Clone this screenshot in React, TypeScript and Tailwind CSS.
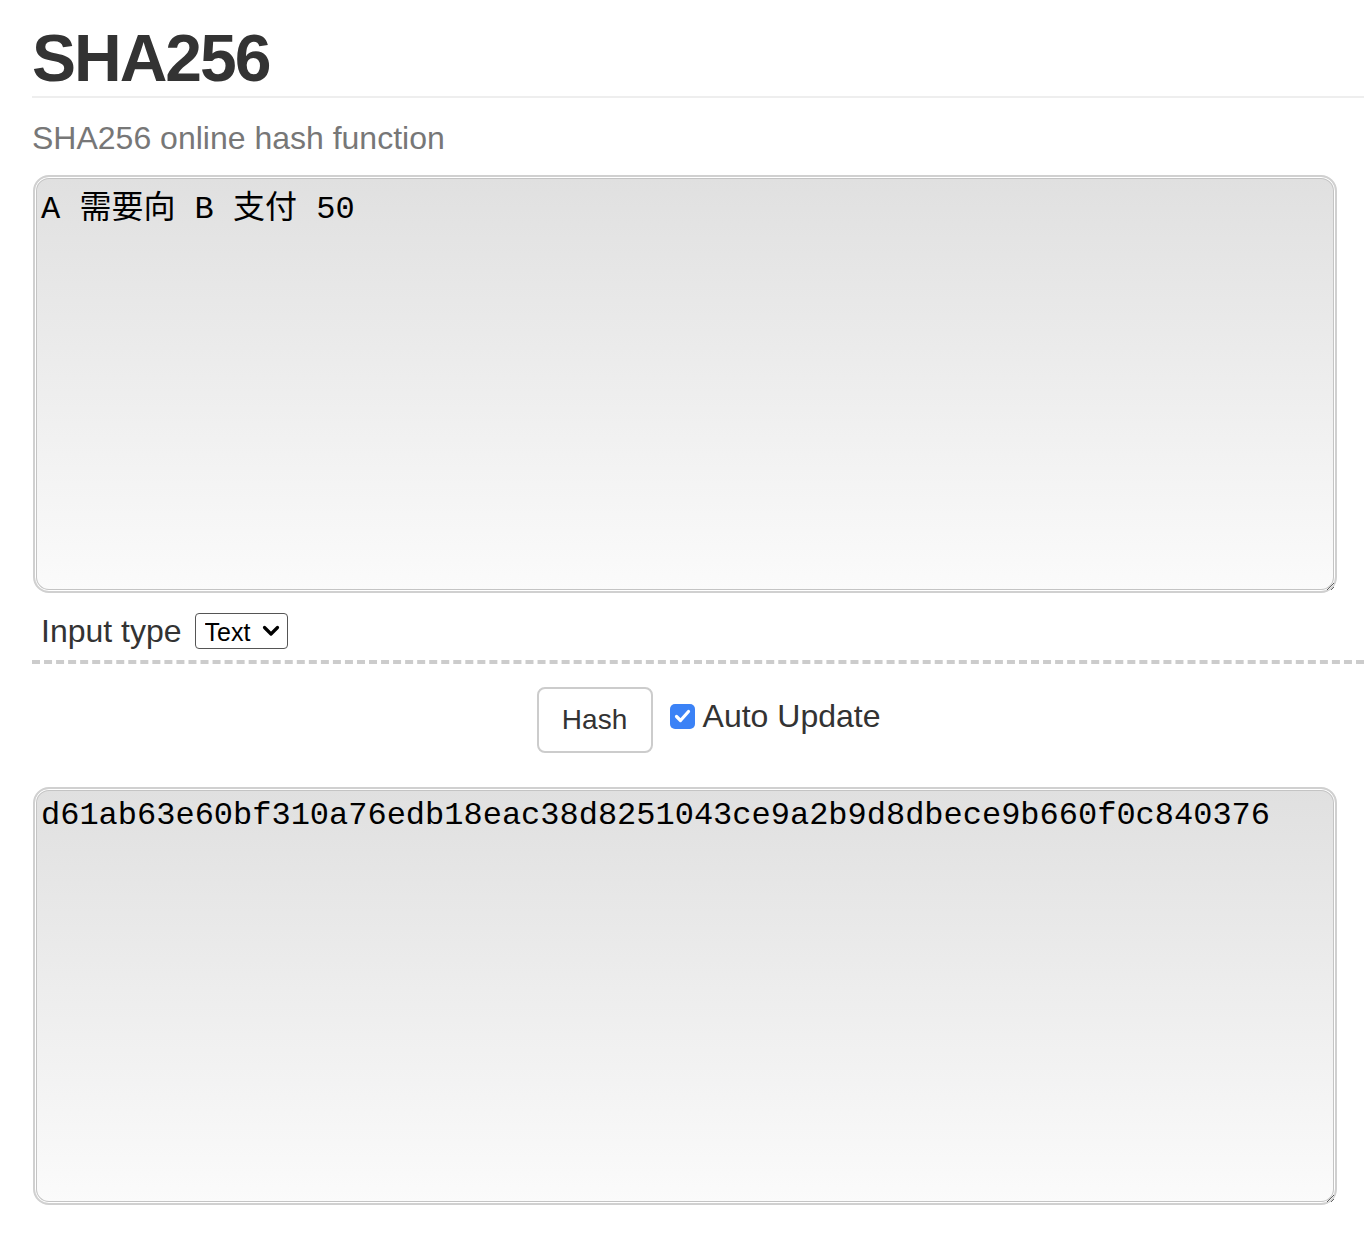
export default function App() {
  const box =
    "block w-[1304px] h-[418px] ml-px rounded-[16px] border-2 border-[#d0d0d0] bg-linear-to-b from-[#e0e0e0] to-[#fbfbfb] shadow-[inset_0_0_0_1px_#ffffff,inset_0_0_0_2px_#c4c4c4] px-[6px] text-[32px] text-black outline-none";

  return (
    <div className="min-h-[1246px] bg-white pl-8 pt-[25px] font-['Liberation_Sans',Arial,sans-serif] text-[#333]">
      <h1 className="border-b-2 border-[#eee] pb-[5px] text-[66px] font-bold leading-[66px] tracking-[-2px] text-[#333]">
        SHA256
      </h1>
      <p className="mt-[24px] text-[32px] leading-[32px] text-[#777]">SHA256 online hash function</p>

      <textarea
        className={box + " mt-[21px] pt-[15px] leading-[36px] font-['Liberation_Mono','Noto_Sans_CJK_SC',monospace]"}
        defaultValue="A 需要向 B 支付 50"
      />

      <div className="mt-[20px] flex h-[36px] items-center gap-[13px] pl-[9px]">
        <span className="text-[32px] leading-[36px] text-[#333]">Input type</span>
        <div className="relative">
          <select className="h-[36px] w-[93px] appearance-none rounded-[4px] border-[1.5px] border-[#555] bg-white pl-[9px] text-[25px] text-black outline-none">
            <option>Text</option>
          </select>
          <svg
            className="pointer-events-none absolute right-[8px] top-[12px]"
            width="18"
            height="12"
            viewBox="0 0 18 12"
          >
            <path d="M2.5 2.5 L9 9 L15.5 2.5" fill="none" stroke="#000" strokeWidth="3.2" strokeLinecap="round" strokeLinejoin="round" />
          </svg>
        </div>
      </div>

      <div className="mt-[11px] border-t-4 border-dashed border-[#ccc]" />

      <div className="mt-[23px] flex w-[1332px] items-center justify-center pl-[21px]">
        <button className="h-[66px] w-[116px] rounded-[8px] border-2 border-[#ccc] bg-white text-[28px] text-[#333]">
          Hash
        </button>
        <label className="ml-[17px] flex items-center gap-[8px] -mt-[8px]">
          <span className="flex h-[25px] w-[25px] items-center justify-center rounded-[5px] bg-[#3b82f6]">
            <svg width="17" height="14" viewBox="0 0 17 14">
              <path d="M2.5 7.5 L6.5 11.5 L14.5 2.5" fill="none" stroke="#fff" strokeWidth="3.2" strokeLinecap="round" strokeLinejoin="round" />
            </svg>
          </span>
          <span className="text-[32px] leading-[32px] text-[#333]">Auto Update</span>
        </label>
      </div>

      <textarea
        className={box + " mt-[34px] pt-[9px] leading-[36px] font-['Liberation_Mono',monospace]"}
        defaultValue="d61ab63e60bf310a76edb18eac38d8251043ce9a2b9d8dbece9b660f0c840376"
      />
    </div>
  );
}
